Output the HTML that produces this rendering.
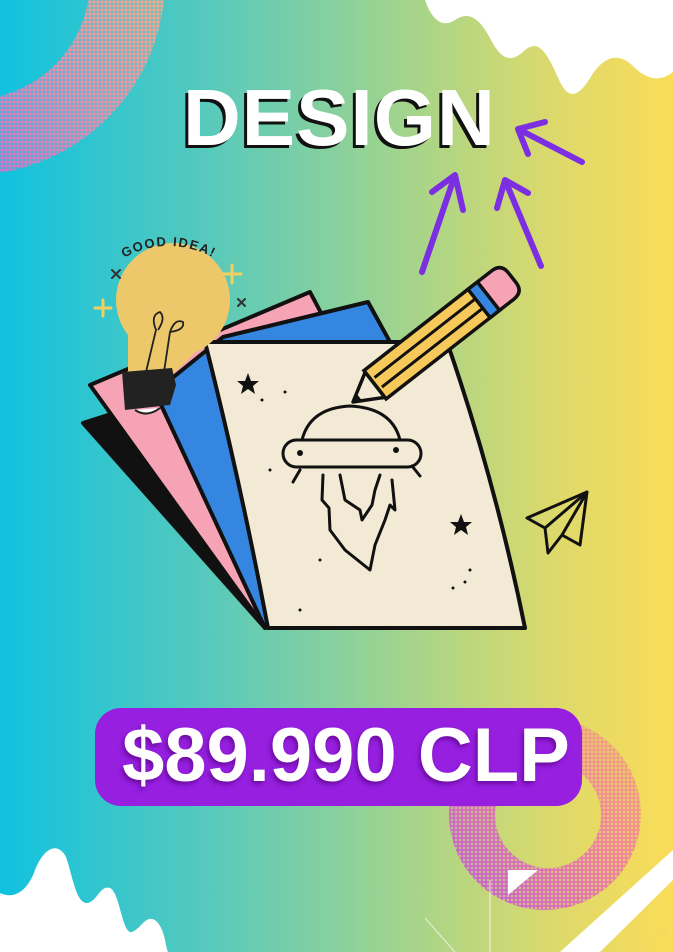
<!DOCTYPE html>
<html><head><meta charset="utf-8"><style>
html,body{margin:0;padding:0}
body{width:673px;height:952px;overflow:hidden;position:relative;background:linear-gradient(90deg,#10c2df 0%,#55c9bd 30%,#a2d48c 60%,#dcd96c 82%,#fadc58 100%);font-family:"Liberation Sans",sans-serif}
svg{position:absolute;left:0;top:0}
.t{position:absolute;font-weight:bold;color:#fff;white-space:nowrap}
</style></head><body>
<svg width="673" height="952" viewBox="0 0 673 952">
<defs>
<pattern id="dots" width="4" height="4" patternUnits="userSpaceOnUse"><circle cx="2" cy="2" r="1.9" fill="#fff"/></pattern>
<linearGradient id="rg1" x1="0" y1="1" x2="1" y2="0"><stop offset="0" stop-color="#b050e8"/><stop offset="0.5" stop-color="#e78fb0"/><stop offset="1" stop-color="#e9d06a"/></linearGradient>
<linearGradient id="rg2" x1="0" y1="1" x2="1" y2="0"><stop offset="0" stop-color="#c050e0"/><stop offset="0.6" stop-color="#f080a0"/><stop offset="1" stop-color="#f0b070"/></linearGradient>
<mask id="m1"><rect width="673" height="952" fill="url(#dots)"/></mask>
</defs>
<g mask="url(#m1)"><path d="M-30,-215 A195,195 0 1,1 -30.1,-215 Z M-30,-140 A120,120 0 1,0 -29.9,-140 Z" fill="url(#rg1)" fill-rule="evenodd"/></g>
<path d="M425,0 C430,15 440,30 455,20 C470,10 480,20 490,38 C500,58 510,65 525,50 C540,38 548,55 560,82 C570,102 580,95 592,75 C605,55 620,52 635,68 C648,80 660,82 673,72 L673,0 Z" fill="#fff"/>
<g mask="url(#m1)"><path d="M545,718 A96,96 0 1,1 544.9,718 Z M548,762 A53,53 0 1,0 548.1,762 Z" fill="url(#rg2)" fill-rule="evenodd"/></g>
<path d="M560,952 L673,850 L673,880 L600,952 Z" fill="#fff"/>
<path d="M640,952 L673,922" stroke="#f5d860" stroke-width="2"/>
<line x1="490" y1="880" x2="490" y2="952" stroke="#fff" stroke-width="1" opacity="0.8"/>
<line x1="425" y1="918" x2="455" y2="952" stroke="#fff" stroke-width="1" opacity="0.7"/>
<path d="M508,870 L538,870 L508,895 Z" fill="#fff"/>
<path d="M0,952 L0,893 C15,900 28,890 35,870 C42,852 55,840 65,855 C72,870 75,905 88,903 C98,900 100,885 110,888 C120,892 122,935 132,932 C142,928 145,915 155,920 C165,928 165,945 168,952 Z" fill="#fff"/>
<g stroke="#7b2ee2" stroke-width="6" fill="none" stroke-linecap="round" stroke-linejoin="round">
<path d="M518,129 L582,162 M518,129 L545,122 M518,129 L528,154"/>
<path d="M422,272 L455,175 M455,175 L432,192 M455,175 L463,210"/>
<path d="M541,266 L505,180 M505,180 L497,208 M505,180 L528,193"/>
</g>
<g stroke="#111" stroke-width="4" stroke-linejoin="round">
<path d="M83,423 L155,400 L265,628 Z" fill="#111"/>
<path d="M90,385 L310,292 L330,330 L265,628 Z" fill="#f6a3b5"/>
<path d="M155,392 L223,337 L368,302 L390,342 L265,628 Z" fill="#3486e0"/>
<path d="M205,342 L447,342 Q495,480 525,628 L268,628 Q240,480 205,342 Z" fill="#f3ead6"/>
</g>
<g stroke="#111" stroke-width="3" fill="none" stroke-linecap="round" stroke-linejoin="round">
<path d="M302,440 Q310,408 350,406 Q392,408 400,440"/>
<rect x="283" y="440" width="138" height="27" rx="13.5"/>
<path d="M300,470 L293,482 M412,466 L420,476"/>
<path d="M323,475 L322,500 L329,508 L330,530 L345,550 L370,570 L375,545 L385,520 L390,505 L395,510 L392,480 M340,475 L345,500 L360,510 L362,520 L372,505 L375,490 L380,475"/>
<path d="M527,518 L587,492 L580,545 L562,535 L548,553 L545,528 Z M545,528 L587,492 M562,535 L587,492"/>
</g>
<path d="M248,373 l3,8 8,0 -6,5 2,8 -7,-5 -7,5 2,-8 -6,-5 8,0z" fill="#111"/>
<path d="M461,514 l3,8 8,0 -6,5 2,8 -7,-5 -7,5 2,-8 -6,-5 8,0z" fill="#111"/>
<g fill="#111"><circle cx="300" cy="453" r="3"/><circle cx="396" cy="450" r="3"/><circle cx="285" cy="392" r="1.5"/><circle cx="262" cy="400" r="1.5"/><circle cx="270" cy="470" r="1.5"/><circle cx="465" cy="582" r="1.5"/><circle cx="470" cy="570" r="1.5"/><circle cx="300" cy="610" r="1.5"/><circle cx="320" cy="560" r="1.5"/><circle cx="453" cy="588" r="1.5"/></g>
<g transform="translate(353,402) rotate(-38)">
<path d="M0,0 L28,-16 L28,16 Z" fill="#f3ead6" stroke="#111" stroke-width="3.5" stroke-linejoin="round"/>
<path d="M0,0 L8,-4.5 L8,4.5 Z" fill="#111"/>
<rect x="28" y="-18" width="140" height="36" fill="#f7c85a" stroke="#111" stroke-width="3.5"/>
<line x1="32" y1="-6" x2="165" y2="-6" stroke="#111" stroke-width="3"/>
<line x1="32" y1="6" x2="165" y2="6" stroke="#111" stroke-width="3"/>
<rect x="160" y="-18" width="12" height="36" fill="#3486e0" stroke="#111" stroke-width="3.5"/>
<path d="M172,-18 L190,-18 Q202,-18 202,-6 L202,6 Q202,18 190,18 L172,18 Z" fill="#f6a3b5" stroke="#111" stroke-width="3.5"/>
</g>
<circle cx="173" cy="300" r="57" fill="#ecc86a"/>
<path d="M128,330 L218,330 L172,375 L128,375 Z" fill="#ecc86a"/>
<g stroke="#222" stroke-width="1.8" fill="none"><path d="M146,372 L156,330 Q150,315 160,312 Q166,318 158,330 M164,372 L170,332 Q175,318 183,322 Q185,330 170,332"/></g>
<path d="M122,372 L172,368 L176,385 L170,405 L125,410 Z" fill="#222"/>
<path d="M135,410 Q147,418 160,408" fill="#fff" stroke="#222" stroke-width="2"/>
<g stroke="#f2d060" stroke-width="3" stroke-linecap="round"><path d="M232,265 v18 M223,274 h18 M103,300 v16 M95,308 h16"/></g>
<g stroke="#333" stroke-width="2" stroke-linecap="round"><path d="M112,270 l8,8 M120,270 l-8,8 M238,299 l7,7 M245,299 l-7,7"/></g>
<path id="arc" d="M124,258 Q170,232 222,262" fill="none"/>
<text font-family="Liberation Sans, sans-serif" font-size="13" font-weight="bold" fill="#222" letter-spacing="1.5"><textPath href="#arc">GOOD IDEA!</textPath></text>
<rect x="95" y="708" width="487" height="98" rx="26" fill="#961fe0"/>
</svg>
<div class="t" style="left:183px;top:78px;font-size:80px;letter-spacing:1px;text-shadow:-3px 3px 0 #111;line-height:1">DESIGN</div>
<div class="t" style="left:122px;top:718px;font-size:76px;line-height:1;letter-spacing:0px;text-shadow:-2px 3px 4px rgba(80,0,120,0.6)">$89.990 CLP</div>
</body></html>
